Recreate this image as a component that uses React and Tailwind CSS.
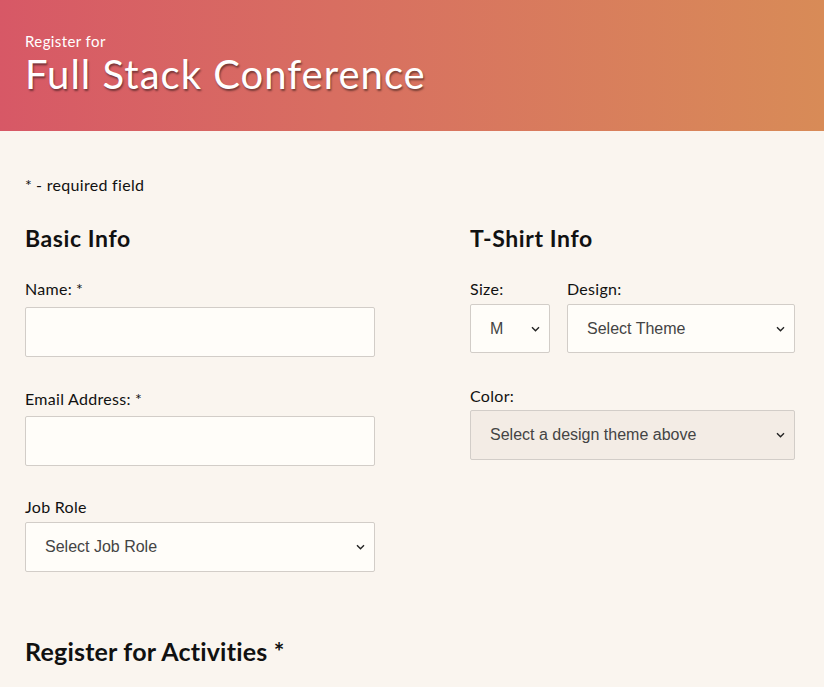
import { useState } from "react";

function Chevron() {
  return (
    <svg width="9" height="6" viewBox="0 0 9 6" className="pointer-events-none absolute right-[10px] top-1/2 -translate-y-1/2">
      <path d="M1 1.2l3.5 3.5 3.5-3.5" fill="none" stroke="#222" strokeWidth="1.4" />
    </svg>
  );
}

function Select({ value, options, className = "", disabled = false }) {
  return (
    <div className={`relative ${className}`}>
      <select
        defaultValue={value}
        disabled={disabled}
        className={`h-full w-full appearance-none rounded-[2px] border border-[#d2cdc8] pl-[19px] pr-8 text-[16px] text-[#444] outline-none ${
          disabled ? "bg-[#f3ece5]" : "bg-[#fffdf9]"
        }`}
        style={{ fontFamily: '"Liberation Sans", Arial, sans-serif' }}
      >
        {options.map((o) => (
          <option key={o}>{o}</option>
        ))}
      </select>
      <Chevron />
    </div>
  );
}

function Label({ children, req }) {
  return (
    <label className="block text-[16px] leading-none tracking-[0.3px] text-[#111]">
      {children}
      {req && <span className="ml-[4px]">*</span>}
    </label>
  );
}

export default function App() {
  const [name, setName] = useState("");
  const [email, setEmail] = useState("");

  return (
    <div className="min-h-screen bg-[#faf5ef] text-[#111]" style={{ fontFamily: "Lato, 'Open Sans', sans-serif" }}>
      <header className="h-[131px] bg-linear-to-r from-[#d75866] to-[#d88b57] px-[25px] pt-[34px] text-white">
        <p className="text-[15px] leading-none tracking-[0.4px]">Register for</p>
        <h1 className="mt-[5px] text-[40px] leading-none tracking-[1px] [text-shadow:1px_2px_2px_rgba(0,0,0,0.45)]">
          Full Stack Conference
        </h1>
      </header>

      <main className="px-[25px] pt-[46px]">
        <p className="text-[16px] leading-none tracking-[0.3px]">
          <span className="mr-[4px]">*</span>- required field
        </p>

        <div className="mt-[34px] flex gap-[95px]">
          {/* 基本情報 */}
          <section className="w-[350px]">
            <h2 className="text-[23px] font-bold leading-none tracking-[0.6px]">Basic Info</h2>
            <div className="mt-[31px]">
              <Label req>Name:</Label>
              <input
                value={name}
                onChange={(e) => setName(e.target.value)}
                className="mt-[10px] block h-[50px] w-full rounded-[2px] border border-[#d2cdc8] bg-[#fffdf9] px-3 outline-none"
              />
            </div>
            <div className="mt-[34px]">
              <Label req>Email Address:</Label>
              <input
                value={email}
                onChange={(e) => setEmail(e.target.value)}
                className="mt-[9px] block h-[50px] w-full rounded-[2px] border border-[#d2cdc8] bg-[#fffdf9] px-3 outline-none"
              />
            </div>
            <div className="mt-[33px]">
              <Label>Job Role</Label>
              <Select className="mt-[7px] h-[50px]" value="Select Job Role" options={["Select Job Role", "Full Stack JavaScript Developer", "Front End Developer", "Back End Developer", "Designer", "Student", "Other"]} />
            </div>
          </section>

          {/* Tシャツ */}
          <section className="w-[325px]">
            <h2 className="text-[23px] font-bold leading-none tracking-[0.6px]">T-Shirt Info</h2>
            <div className="mt-[31px] flex gap-[17px]">
              <div className="w-[80px]">
                <Label>Size:</Label>
                <Select className="mt-[7px] h-[49px]" value="M" options={["S", "M", "L", "XL"]} />
              </div>
              <div className="flex-1">
                <Label>Design:</Label>
                <Select className="mt-[7px] h-[49px]" value="Select Theme" options={["Select Theme", "Theme - JS Puns", "Theme - I ♥ JS"]} />
              </div>
            </div>
            <div className="mt-[35px]">
              <Label>Color:</Label>
              <Select className="mt-[6px] h-[50px]" disabled value="Select a design theme above" options={["Select a design theme above"]} />
            </div>
          </section>
        </div>

        <h2 className="mt-[67px] text-[25px] font-bold leading-none tracking-[0.2px]">
          Register for Activities <span>*</span>
        </h2>
      </main>
    </div>
  );
}
